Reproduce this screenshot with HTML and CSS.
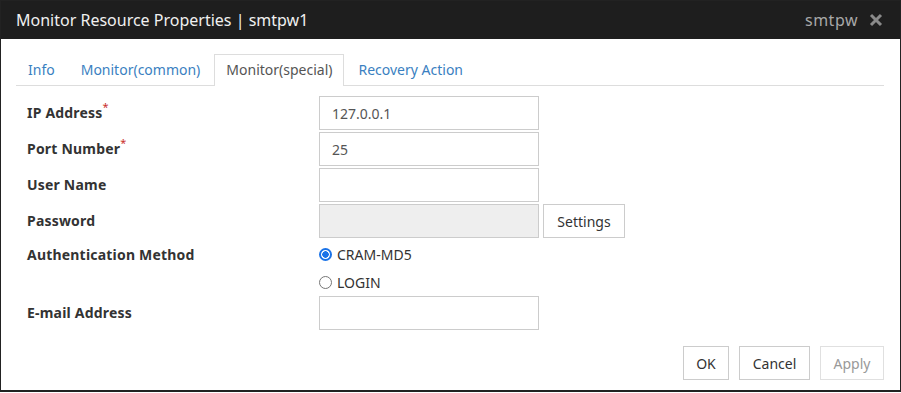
FILE: index.html
```html
<!DOCTYPE html>
<html lang="en">
<head>
    <meta charset="UTF-8">
    <meta name="viewport" content="width=device-width, initial-scale=1.0">
    <title>Monitor Resource Properties</title>
    <link rel="stylesheet" href="styles.css">
</head>
<body>
    <div class="dialog">
        <div class="titlebar">
            <span class="title">Monitor Resource Properties | smtpw1</span>
            <div class="title-right">
                <span class="title-name">smtpw</span>
                <svg class="close" width="14" height="14" viewBox="0 0 14 14">
                    <path d="M2 2 L12 12 M12 2 L2 12" stroke="#8a8a8a" stroke-width="3" stroke-linecap="butt"/>
                </svg>
            </div>
        </div>
        <div class="content">
            <ul class="tabs">
                <li class="tab">Info</li>
                <li class="tab">Monitor(common)</li>
                <li class="tab active">Monitor(special)</li>
                <li class="tab">Recovery Action</li>
            </ul>
            <div class="form">
                <div class="row">
                    <label class="label">IP Address<sup class="req">*</sup></label>
                    <input class="field" type="text" value="127.0.0.1">
                </div>
                <div class="row">
                    <label class="label">Port Number<sup class="req">*</sup></label>
                    <input class="field" type="text" value="25">
                </div>
                <div class="row">
                    <label class="label">User Name</label>
                    <input class="field" type="text" value="">
                </div>
                <div class="row">
                    <label class="label">Password</label>
                    <input class="field disabled" type="password" value="" disabled>
                    <button class="btn settings">Settings</button>
                </div>
                <div class="row radio-row">
                    <label class="label">Authentication Method</label>
                    <label class="radio"><span class="dot checked"></span>CRAM-MD5</label>
                </div>
                <div class="row radio-row">
                    <span class="label"></span>
                    <label class="radio"><span class="dot"></span>LOGIN</label>
                </div>
                <div class="row">
                    <label class="label">E-mail Address</label>
                    <input class="field" type="text" value="">
                </div>
            </div>
            <div class="footer">
                <button class="btn ok">OK</button>
                <button class="btn cancel">Cancel</button>
                <button class="btn apply" disabled>Apply</button>
            </div>
        </div>
    </div>
</body>
</html>
```

FILE: styles.css
```css
* {
    box-sizing: border-box;
}

body {
    margin: 0;
    padding: 0;
    font-family: "Noto Sans", "Liberation Sans", sans-serif;
    font-size: 14px;
    color: #333;
    background: #fff;
}

.dialog {
    width: 901px;
    height: 392px;
    border: 1px solid #222;
    border-bottom-width: 2px;
    background: #fff;
}

.titlebar {
    height: 38px;
    background: #1e1e1e;
    display: flex;
    align-items: center;
    justify-content: space-between;
    padding: 0 17px 0 15px;
}

.title {
    color: #f0f0f0;
    font-size: 16px;
}

.title-right {
    display: flex;
    align-items: center;
    gap: 11px;
}

.title-name {
    color: #a8a8a8;
    font-size: 16px;
    letter-spacing: 0.5px;
}

.content {
    padding: 15px 16px 0 15px;
}

.tabs {
    list-style: none;
    margin: 0;
    padding: 0;
    display: flex;
    border-bottom: 1px solid #ddd;
    height: 32px;
}

.tab {
    padding: 0 11px;
    height: 32px;
    line-height: 30px;
    margin-right: 2px;
    color: #3a7fc1;
    border: 1px solid transparent;
    border-bottom: none;
}

.tab.active {
    color: #555;
    border-color: #ddd;
    background: #fff;
    height: 32px;
    margin-bottom: -1px;
}

.form {
    padding-top: 10px;
    display: flex;
    flex-direction: column;
    gap: 2px;
}

.row {
    display: flex;
    align-items: center;
    height: 34px;
}

.radio-row {
    height: 26px;
}

.label {
    width: 303px;
    padding-left: 11px;
    padding-bottom: 2px;
    font-weight: bold;
    color: #333;
    letter-spacing: 0.2px;
}

.radio-row .label {
    padding-bottom: 0;
    padding-top: 2px;
}

.req {
    color: #c9302c;
    font-weight: normal;
    font-size: 11px;
    vertical-align: top;
    position: relative;
    top: -4px;
}

.field {
    width: 220px;
    height: 34px;
    border: 1px solid #ccc;
    padding: 0 12px;
    font-family: inherit;
    font-size: 14px;
    color: #555;
    background: #fff;
    outline: none;
}

.field.disabled {
    background: #eee;
}

.radio {
    display: flex;
    align-items: center;
    gap: 5px;
    color: #333;
    padding-top: 2px;
}

.dot {
    width: 13px;
    height: 13px;
    border-radius: 50%;
    border: 1px solid #767676;
    background: #fff;
}

.dot.checked {
    border: 2px solid #1a73e8;
    background: radial-gradient(circle, #1a73e8 0, #1a73e8 3px, #fff 3.5px);
}

.btn {
    height: 34px;
    border: 1px solid #ccc;
    background: #fff;
    font-family: inherit;
    font-size: 14px;
    color: #333;
    padding: 0 12px;
}

.settings {
    width: 82px;
    margin-left: 4px;
}

.footer {
    display: flex;
    justify-content: flex-end;
    gap: 10px;
    margin-top: 16px;
}

.ok {
    width: 46px;
}

.cancel {
    width: 71px;
}

.apply {
    width: 64px;
    color: #999;
    border-color: #e0e0e0;
}
```
